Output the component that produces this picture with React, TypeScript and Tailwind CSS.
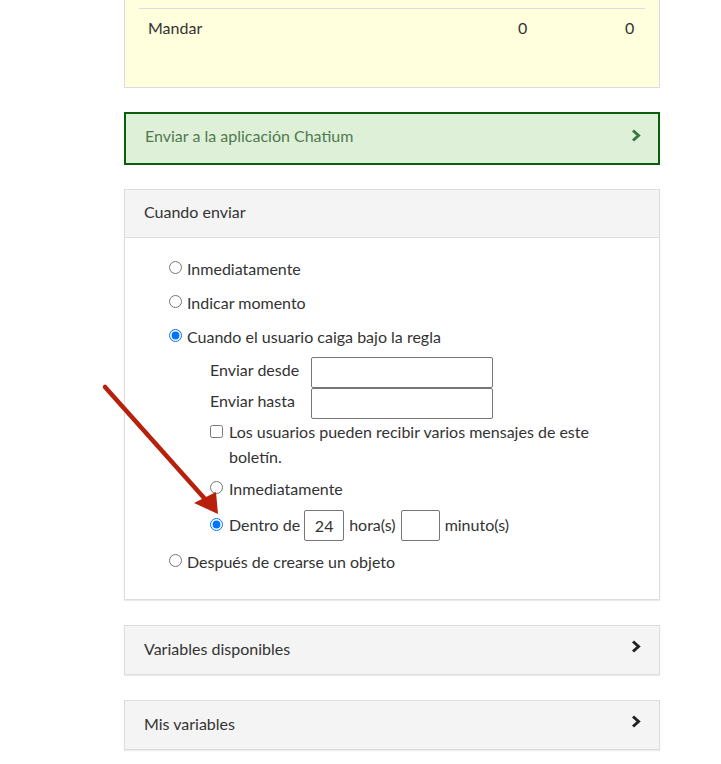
import type { ReactNode } from 'react';

const font = { fontFamily: 'Lato, "Liberation Sans", sans-serif' };

function Chevron({ className }: { className: string }) {
  return (
    <svg width="10" height="13" viewBox="0 0 10 13" className={className}>
      <path d="M2 1.5 L7.5 6.5 L2 11.5" fill="none" stroke="currentColor" strokeWidth="3" strokeLinejoin="miter" />
    </svg>
  );
}

function CollapsedPanel({ title }: { title: string }) {
  return (
    <div className="mt-[25px] flex h-[50px] items-center justify-between border border-[#dddddd] bg-[#f4f4f4] pb-[3px] pl-[19px] pr-[18px] shadow-[0_1px_1px_rgba(0,0,0,0.08)]">
      <span className="text-[16px] text-[#333333]">{title}</span>
      <Chevron className="-mt-[5px] text-[#222222]" />
    </div>
  );
}

function RadioRow({ label, checked, children }: { label?: string; checked?: boolean; children?: ReactNode }) {
  return (
    <label className="flex h-[34px] items-center">
      <input type="radio" name="when" defaultChecked={checked} className="mr-[5px] h-[13px] w-[13px] -translate-y-[2px]" />
      {label && <span>{label}</span>}
      {children}
    </label>
  );
}

function TextBox({ width, value }: { width: string; value?: string }) {
  return (
    <input
      type="text"
      defaultValue={value}
      className={`${width} h-[31px] rounded-[2px] border border-[#767676] bg-white px-2 text-center text-[16px] text-[#333333] outline-none`}
    />
  );
}

export default function App() {
  return (
    <div className="relative min-h-[764px] w-[721px] bg-white text-[16px] text-[#333333]" style={font}>
      <div className="ml-[124px] w-[536px] pb-[15px]">
        {/* Stats panel (scrolled) */}
        <div className="h-[88px] border border-t-0 border-[#dddddd] bg-[#ffffde] px-[14px] pt-[8px]">
          <div className="flex h-[40px] items-center border-t border-[#dddddd] pb-[2px] pl-[9px]">
            <span className="flex-1">Mandar</span>
            <span className="w-[20px]">0</span>
            <span className="w-[87px]" />
            <span className="w-[20px]">0</span>
          </div>
        </div>

        {/* Chatium */}
        <div className="mt-[24px] flex h-[53px] items-center justify-between border-2 border-[#0b5e0b] bg-[#dff0d8] pb-[5px] pl-[19px] pr-[17px]">
          <span className="text-[#4f7a4f]">Enviar a la aplicación Chatium</span>
          <Chevron className="-mt-[2px] text-[#3c763d]" />
        </div>

        {/* Cuando enviar */}
        <div className="mt-[24px] border border-[#dddddd] bg-white shadow-[0_1px_1px_rgba(0,0,0,0.08)]">
          <div className="flex h-[48px] items-center border-b border-[#dddddd] bg-[#f4f4f4] pb-[3px] pl-[19px]">
            Cuando enviar
          </div>
          <div className="pb-[20px] pl-[44px] pt-[14px]">
            <RadioRow label="Inmediatamente" />
            <RadioRow label="Indicar momento" />
            <RadioRow label="Cuando el usuario caiga bajo la regla" checked />
            <div className="pl-[41px]">
              <div className="mt-[3px] flex flex-col">
                <div className="flex items-center">
                  <span className="w-[101px] pb-[6px]">Enviar desde</span>
                  <TextBox width="w-[182px]" />
                </div>
                <div className="flex items-center">
                  <span className="w-[101px] pb-[6px]">Enviar hasta</span>
                  <TextBox width="w-[182px]" />
                </div>
              </div>
              <label className="flex items-start leading-[25px]">
                <input type="checkbox" className="mr-[6px] mt-[6px] h-[13px] w-[13px] shrink-0" />
                <span className="w-[390px]">Los usuarios pueden recibir varios mensajes de este boletín.</span>
              </label>
              <div className="mt-[3px]">
                <label className="flex h-[34px] items-center">
                  <input type="radio" name="inner" className="mr-[6px] h-[13px] w-[13px] -translate-y-[2px]" />
                  <span>Inmediatamente</span>
                </label>
                <label className="flex h-[36px] items-center pt-[2px]">
                  <input type="radio" name="inner" defaultChecked className="mr-[6px] h-[13px] w-[13px] -translate-y-[1px]" />
                  <span>Dentro de</span>
                  <span className="ml-[4px]"><TextBox width="w-[40px]" value="24" /></span>
                  <span className="ml-[5px]">hora(s)</span>
                  <span className="ml-[5px]"><TextBox width="w-[39px]" /></span>
                  <span className="ml-[5px]">minuto(s)</span>
                </label>
              </div>
            </div>
            <div className="mt-[3px]">
              <RadioRow label="Después de crearse un objeto" />
            </div>
          </div>
        </div>

        <CollapsedPanel title="Variables disponibles" />
        <CollapsedPanel title="Mis variables" />
      </div>

      {/* Annotation arrow */}
      <svg className="pointer-events-none absolute left-0 top-0" width="721" height="764">
        <line x1="105" y1="387" x2="205" y2="499" stroke="#b8200c" strokeWidth="4.5" strokeLinecap="round" />
        <polygon points="194,503 216,492 218,514" fill="#b8200c" />
      </svg>
    </div>
  );
}
